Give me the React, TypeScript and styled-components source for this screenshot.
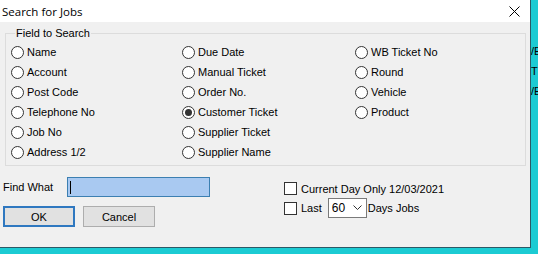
import React from "react";
import styled, { createGlobalStyle } from "styled-components";

const GlobalStyle = createGlobalStyle`
  html, body {
    margin: 0;
    padding: 0;
    background: #1ccbd3;
    overflow: hidden;
  }
  * { box-sizing: border-box; }
`;

const Desktop = styled.div`
  width: 538px;
  height: 254px;
  display: flex;
  align-items: flex-start;
  background: #1ccbd3;
  font-family: "Liberation Sans", Arial, sans-serif;
  font-size: 11px;
  color: #000;
`;

const Window = styled.div`
  width: 531px;
  height: 248px;
  flex: none;
  display: flex;
  flex-direction: column;
  background: #f0f0f0;
  border-right: 1px solid #2c5966;
  border-bottom: 1px solid #2c5966;
`;

const TitleBar = styled.div`
  height: 22px;
  flex: none;
  display: flex;
  align-items: center;
  justify-content: space-between;
  background: #ffffff;
  padding: 0 10px 0 2px;
  font-family: "Open Sans", "Noto Sans", sans-serif;
  font-size: 11.5px;
`;

const Body = styled.div`
  flex: 1;
  display: flex;
  flex-direction: column;
  padding: 4px 5px 0 3px;
`;

const Group = styled.fieldset`
  margin: 0 0 0 2px;
  padding: 0 0 3px 5px;
  width: 521px;
  height: 140px;
  border: 1px solid #dcdcdc;
  border-radius: 0;
`;

const Legend = styled.legend`
  padding: 0 1px;
  margin-left: 4px;
  line-height: 14px;
`;

const Grid = styled.div`
  display: grid;
  grid-template-columns: 171px 173px 1fr;
  grid-template-rows: repeat(6, 20px);
  grid-auto-flow: column;
  margin-top: 2px;
`;

const Option = styled.label`
  display: flex;
  align-items: center;
  gap: 3px;
  white-space: nowrap;
`;

const RadioDot = styled.span<{ $checked?: boolean }>`
  width: 13px;
  height: 13px;
  border-radius: 50%;
  border: 1px solid #333;
  background: #fff;
  display: flex;
  align-items: center;
  justify-content: center;
  &::after {
    content: "";
    width: 7px;
    height: 7px;
    border-radius: 50%;
    background: ${(p) => (p.$checked ? "#333" : "transparent")};
  }
`;

const Lower = styled.div`
  display: flex;
  padding-top: 11px;
`;

const LeftCol = styled.div`
  width: 281px;
  display: flex;
  flex-direction: column;
  gap: 9px;
`;

const FindRow = styled.div`
  display: flex;
  align-items: center;
`;

const FindLabel = styled.span`
  width: 64px;
`;

const FindInput = styled.div`
  width: 143px;
  height: 20px;
  background: #a9c9f1;
  border: 1px solid #3c7fb1;
  display: flex;
  align-items: center;
  padding-left: 2px;
  &::before {
    content: "";
    width: 1px;
    height: 13px;
    background: #000;
  }
`;

const ButtonRow = styled.div`
  display: flex;
  gap: 8px;
`;

const Button = styled.div<{ $default?: boolean }>`
  width: 72px;
  height: 21px;
  display: flex;
  align-items: center;
  justify-content: center;
  background: #e1e1e1;
  border: ${(p) => (p.$default ? "2px solid #2f78c0" : "1px solid #adadad")};
`;

const RightCol = styled.div`
  display: flex;
  flex-direction: column;
  gap: 0;
  padding-top: 2px;
`;

const CheckRow = styled.div`
  display: flex;
  align-items: center;
  gap: 4px;
  min-height: 19px;
`;

const Box = styled.span`
  width: 13px;
  height: 13px;
  border: 1px solid #333;
  background: #fff;
`;

const Select = styled.div`
  width: 39px;
  height: 20px;
  border: 1px solid #7a7a7a;
  background: #fff;
  display: flex;
  align-items: center;
  justify-content: space-between;
  padding: 0 4px 0 3px;
  margin: 0 -3px 0 2px;
  font-size: 12px;
`;

const Side = styled.div`
  flex: 1;
  display: flex;
  flex-direction: column;
  padding-top: 44px;
  gap: 6px;
  font-size: 11px;
  overflow: hidden;
  line-height: 14px;
  white-space: nowrap;
`;

const Close = () => (
  <svg width="11" height="11" viewBox="0 0 11 11">
    <path d="M0.5 0.5 L10.5 10.5 M10.5 0.5 L0.5 10.5" stroke="#000" strokeWidth="1" />
  </svg>
);

const Chevron = () => (
  <svg width="9" height="6" viewBox="0 0 9 6">
    <path d="M0.5 0.5 L4.5 4.5 L8.5 0.5" stroke="#333" fill="none" strokeWidth="1" />
  </svg>
);

const fields = [
  "Name",
  "Account",
  "Post Code",
  "Telephone No",
  "Job No",
  "Address 1/2",
  "Due Date",
  "Manual Ticket",
  "Order No.",
  "Customer Ticket",
  "Supplier Ticket",
  "Supplier Name",
  "WB Ticket No",
  "Round",
  "Vehicle",
  "Product",
];

export default function App() {
  return (
    <>
      <GlobalStyle />
      <Desktop>
        <Window>
          <TitleBar>
            <span>Search for Jobs</span>
            <Close />
          </TitleBar>
          <Body>
            <Group>
              <Legend>Field to Search</Legend>
              <Grid>
                {fields.map((f) => (
                  <Option key={f}>
                    <RadioDot $checked={f === "Customer Ticket"} />
                    {f}
                  </Option>
                ))}
              </Grid>
            </Group>
            <Lower>
              <LeftCol>
                <FindRow>
                  <FindLabel>Find What</FindLabel>
                  <FindInput />
                </FindRow>
                <ButtonRow>
                  <Button $default>OK</Button>
                  <Button>Cancel</Button>
                </ButtonRow>
              </LeftCol>
              <RightCol>
                <CheckRow>
                  <Box />
                  Current Day Only 12/03/2021
                </CheckRow>
                <CheckRow>
                  <Box />
                  Last
                  <Select>
                    60
                    <Chevron />
                  </Select>
                  Days Jobs
                </CheckRow>
              </RightCol>
            </Lower>
          </Body>
        </Window>
        <Side>
          <span>/E</span>
          <span>T</span>
          <span>/E</span>
        </Side>
      </Desktop>
    </>
  );
}
